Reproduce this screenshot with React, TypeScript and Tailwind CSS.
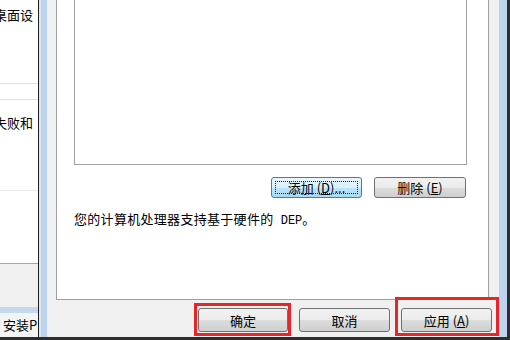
import React from 'react';
import clsx from 'clsx';

const cjk = "font-['Noto_Sans_CJK_SC','Liberation_Sans',sans-serif]";

interface WinButtonProps {
  children: React.ReactNode;
  focused?: boolean;
  className?: string;
}

const WinButton = ({ children, focused, className }: WinButtonProps) => (
  <div
    className={clsx(
      'relative flex items-center justify-center rounded-[3px] border text-[13px] leading-none text-black',
      focused
        ? 'border-[#3c7fb1] bg-[linear-gradient(to_bottom,#eaf6fd_0%,#d9f0fc_50%,#bee6fd_50%,#a7d9f5_100%)]'
        : 'border-[#707070] bg-[linear-gradient(to_bottom,#f2f2f2_0%,#ebebeb_50%,#dddddd_50%,#cfcfcf_100%)]',
      className
    )}
  >
    {focused && <span className="absolute inset-[3px] border border-dotted border-[#222]" />}
    <span className="relative">{children}</span>
  </div>
);

// mnemonic key, e.g. (D) with the letter underlined
const Key = ({ k }: { k: string }) => (
  <span className="ml-[3px]">
    (<u>{k}</u>)
  </span>
);

export default function App() {
  return (
    <div className={clsx('relative flex h-[340px] w-[510px] flex-col overflow-hidden bg-[#2d2d2d]', cjk)}>
      <div className="flex h-[337px]">
        {/* window behind, on the left */}
        <div className="flex w-[38px] flex-col overflow-hidden bg-white text-[13px] text-black">
          <div className="h-[83px] whitespace-nowrap pt-[6px] leading-[18px]">
            <span className="-ml-[6px] block">桌面设</span>
          </div>
          <div className="h-px bg-[#e3e3e3]" />
          <div className="h-[15px]" />
          <div className="h-px bg-[#e3e3e3]" />
          <div className="h-[90px] whitespace-nowrap pt-[14px] leading-[18px]">
            <span className="-ml-[6px] block">失败和</span>
          </div>
          <div className="h-px bg-[#e8e8e8]" />
          <div className="h-[72px]" />
          <div className="h-px bg-[#a8a8a8]" />
          <div className="h-[43px] bg-[#f0f0f0]" />
          <div className="h-[6px] bg-[#c4d9ef]" />
          <div className="flex h-[24px] items-center whitespace-nowrap bg-[#f4f4f4] pl-[3px] text-[13px]">
            安装P
          </div>
        </div>

        {/* dialog frame, left edge */}
        <div className="w-px bg-[#1e1e1e]" />
        <div className="w-[2px] bg-[#dde8f3]" />
        <div className="w-[6px] bg-[#bcd4ee]" />

        {/* dialog body */}
        <div className="flex w-[452px] flex-col bg-[#f0f0f0]">
          <div className="pl-[9px]">
            <div className="h-[300px] w-[433px] border-x border-b border-[#a0a0a0] bg-white pl-[17px]">
              <div className="h-[165px] w-[393px] border-x border-b border-[#a0a0a0] bg-white" />
              <div className="mt-[12px] flex w-[393px] justify-end gap-[12px] pr-px">
                <WinButton focused className="h-[21px] w-[91px]">
                  添加<Key k="D" />...
                </WinButton>
                <WinButton className="h-[21px] w-[92px]">
                  删除<Key k="E" />
                </WinButton>
              </div>
              <p className="mt-[11px] text-[13px] leading-[20px] tracking-[0.3px] text-black">
                您的计算机处理器支持基于硬件的
                <span className="font-['Liberation_Mono',monospace] text-[12px] tracking-normal"> DEP</span>。
              </p>
            </div>
          </div>
          <div className="mt-[8px] flex gap-[11px] pl-[151px]">
            <WinButton className="h-[24px] w-[90px]">确定</WinButton>
            <WinButton className="h-[24px] w-[91px]">取消</WinButton>
            <WinButton className="h-[24px] w-[91px]">
              应用<Key k="A" />
            </WinButton>
          </div>
        </div>

        {/* dialog frame, right edge */}
        <div className="w-[8px] bg-[#bcd4ee]" />
        <div className="w-[3px] bg-[#2d2d2d]" />
      </div>

      {/* annotation boxes */}
      <div className="absolute left-[194px] top-[303px] h-[33px] w-[97px] border-[3px] border-[#e8262a]" />
      <div className="absolute left-[395px] top-[297px] h-[39px] w-[104px] border-[3px] border-[#e8262a]" />
    </div>
  );
}
